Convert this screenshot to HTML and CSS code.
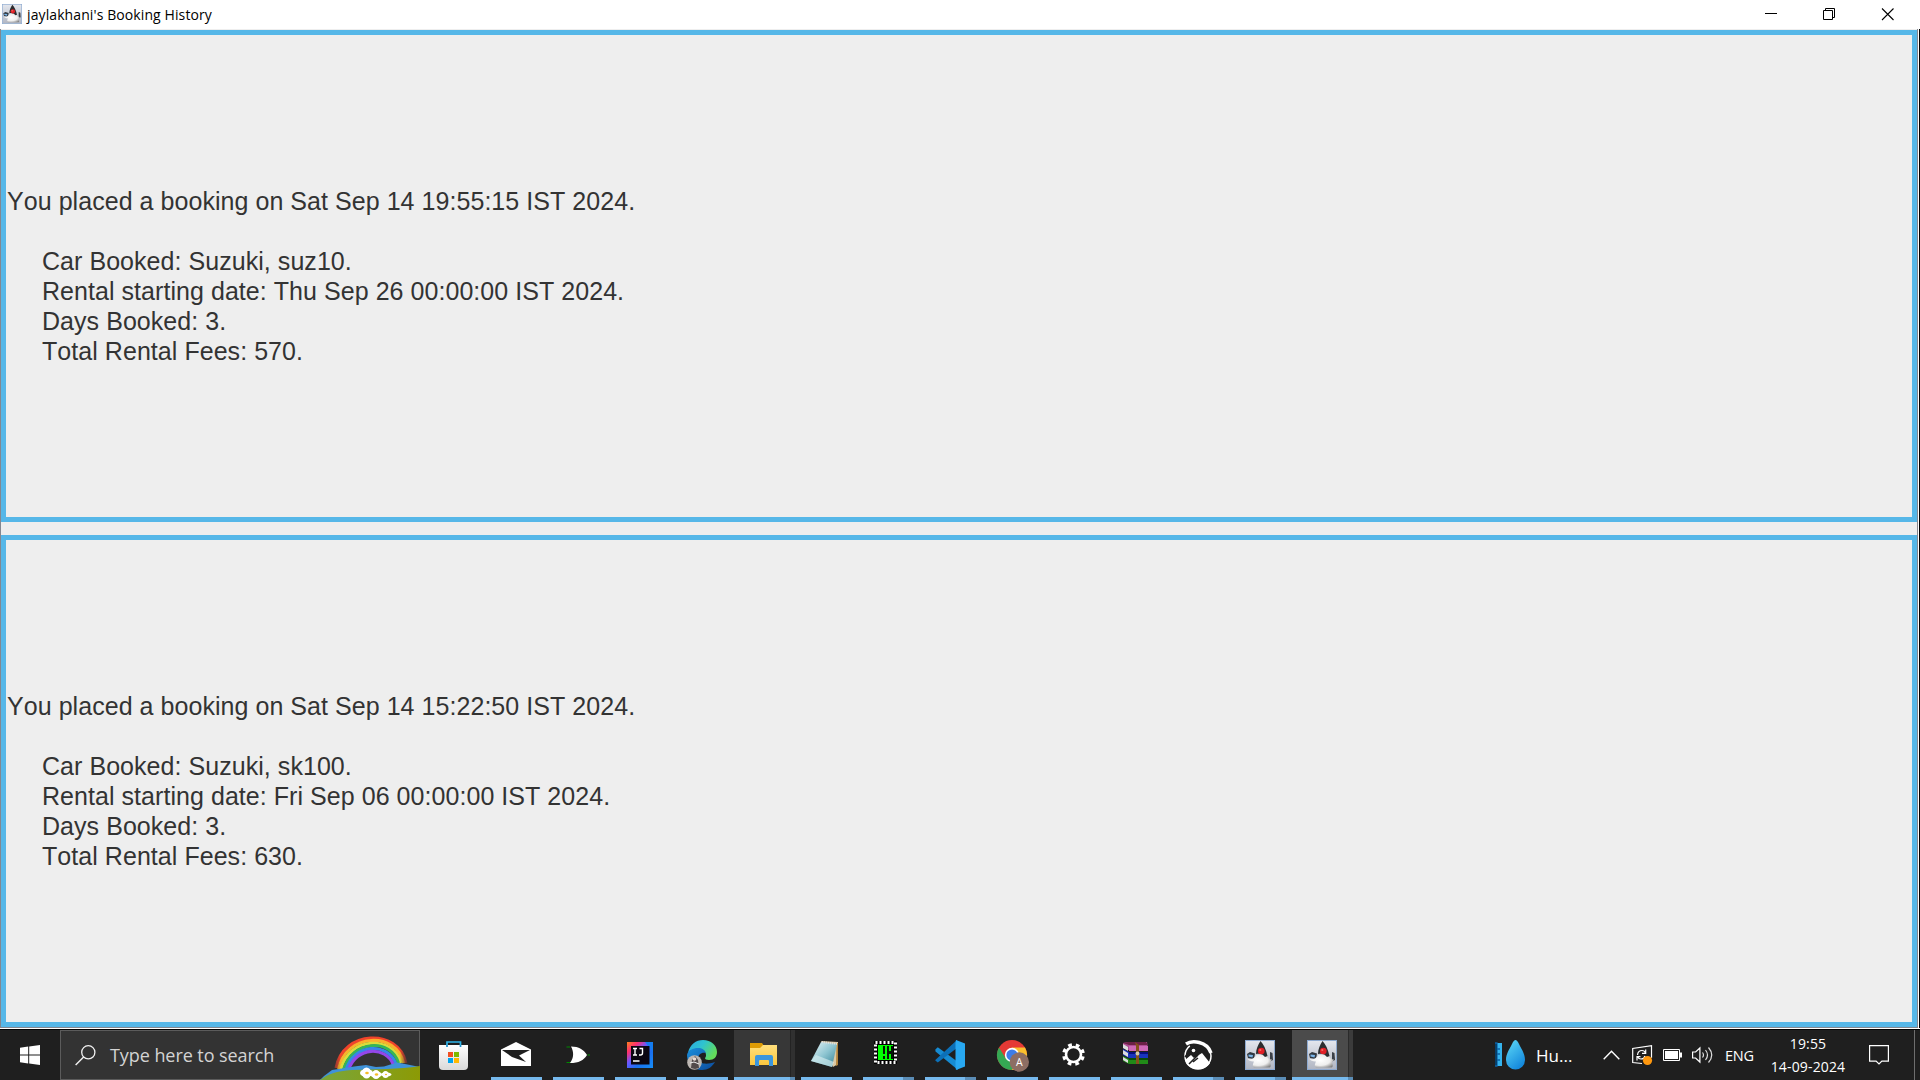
FILE: index.html
```html
<!DOCTYPE html>
<html lang="en">
<head>
<meta charset="utf-8">
<title>jaylakhani's Booking History</title>
<link rel="stylesheet" href="styles.css">
</head>
<body>
<svg class="defs" aria-hidden="true">
  <defs>
    <linearGradient id="tile" x1="0" y1="0" x2="0" y2="1"><stop offset="0" stop-color="#e4e7ee"/><stop offset="1" stop-color="#b0b5c2"/></linearGradient>
    <radialGradient id="belly" cx=".45" cy=".45" r=".65"><stop offset="0" stop-color="#fff"/><stop offset=".6" stop-color="#eee"/><stop offset="1" stop-color="#858585"/></radialGradient>
    <symbol id="duke" viewBox="0 0 30 30">
      <rect x=".5" y=".5" width="29" height="29" fill="url(#tile)" stroke="#8eaad0"/>
      <path d="M2 14l3-2 5 1.500-1 5.500-6-1z" fill="#30373f"/><path d="M3.500 14.500l4.500.5-.5 2.500-4-1z" fill="#7ab4e8"/>
      <path d="M25 12l2.500 1 .5 7-3 1.500z" fill="#3b4048"/>
      <path d="M2 18.500c4 2 7 0 10-4h9c2 3 3 5 6 5l-2 3c1 3 1 4 0 5H9c-2-1-1-4 0-6-2 .5-6-1-7-3z" fill="url(#belly)"/>
      <path d="M15.500 1c3 3 5.500 8 7 15l-2.500 1c-2-3-5-4-9-3 0-5 2-9 4.500-13z" fill="#2c2d2f"/>
      <circle cx="16.300" cy="11" r="3.300" fill="#e01f26"/><circle cx="15.300" cy="10" r="1.100" fill="#f46a61"/>
    </symbol>
    <linearGradient id="bag" x1="0" y1="0" x2="0" y2="1"><stop offset="0" stop-color="#fff"/><stop offset="1" stop-color="#d9d9d9"/></linearGradient>
    <linearGradient id="ij" x1="0" y1="0" x2="1" y2="1"><stop offset="0" stop-color="#fc801d"/><stop offset=".22" stop-color="#fe2f70"/><stop offset=".42" stop-color="#6b57ff"/><stop offset=".65" stop-color="#1a6ff0"/><stop offset="1" stop-color="#168ef7"/></linearGradient>
    <linearGradient id="edgeTop" x1="0" y1="0" x2="1" y2=".5"><stop offset="0" stop-color="#2aa9e0"/><stop offset=".5" stop-color="#2fc3d0"/><stop offset="1" stop-color="#63dc5a"/></linearGradient>
    <linearGradient id="edgeLow" x1="0" y1="0" x2="1" y2="1"><stop offset="0" stop-color="#1b8fdc"/><stop offset="1" stop-color="#0b4a9c"/></linearGradient>
    <linearGradient id="folder" x1="0" y1="0" x2="0" y2="1"><stop offset="0" stop-color="#ffdf7c"/><stop offset="1" stop-color="#fbc73f"/></linearGradient>
    <linearGradient id="note" x1="0" y1="0" x2="1" y2="1"><stop offset="0" stop-color="#e9f5f7"/><stop offset=".5" stop-color="#8fc6d2"/><stop offset="1" stop-color="#2f7f93"/></linearGradient>
    <linearGradient id="drop" x1="0" y1="0" x2=".6" y2="1"><stop offset="0" stop-color="#5fdcf8"/><stop offset="1" stop-color="#1589dc"/></linearGradient>
    <linearGradient id="grass" x1="0" y1="0" x2="1" y2="0"><stop offset="0" stop-color="#7aa63a"/><stop offset="1" stop-color="#8c9a05"/></linearGradient>
    <linearGradient id="fade" x1="0" y1="0" x2="1" y2="0"><stop offset="0" stop-color="#555"/><stop offset=".1" stop-color="#fff"/><stop offset=".88" stop-color="#fff"/><stop offset="1" stop-color="#111"/></linearGradient>
    <mask id="bow"><rect x="13" y="0" width="76" height="50" fill="url(#fade)"/></mask>
  </defs>
</svg>

<div class="screen">
  <div class="window">
    <header class="titlebar">
      <svg class="app-icon"><use href="#duke"/></svg>
      <span class="caption">jaylakhani's Booking History</span>
      <div class="controls">
        <svg viewBox="0 0 58 29"><path d="M23 13.500h12" stroke="#000"/></svg>
        <svg viewBox="0 0 58 29"><path d="M23.500 10.500h9v9h-9zM25.500 10.500v-2h9v9h-2" fill="none" stroke="#000"/></svg>
        <svg viewBox="0 0 58 29"><path d="M24 8.500l11.500 11.500M35.500 8.500L24 20" fill="none" stroke="#000" stroke-width="1.100"/></svg>
      </div>
    </header>
    <main class="bookings">
      <section class="booking">
        <p class="placed">You placed a booking on Sat Sep 14 19:55:15 IST 2024.</p>
        <ul class="details">
          <li>Car Booked: Suzuki, suz10.</li>
          <li>Rental starting date: Thu Sep 26 00:00:00 IST 2024.</li>
          <li>Days Booked: 3.</li>
          <li>Total Rental Fees: 570.</li>
        </ul>
      </section>
      <section class="booking">
        <p class="placed">You placed a booking on Sat Sep 14 15:22:50 IST 2024.</p>
        <ul class="details">
          <li>Car Booked: Suzuki, sk100.</li>
          <li>Rental starting date: Fri Sep 06 00:00:00 IST 2024.</li>
          <li>Days Booked: 3.</li>
          <li>Total Rental Fees: 630.</li>
        </ul>
      </section>
    </main>
  </div>

  <footer class="taskbar">
    <div class="start"><svg width="20" height="20" viewBox="0 0 20 20"><path d="M0 2.800l8.200-1.200v7.900H0zM9.200 1.400L20 0v9.500H9.200zM0 10.500h8.200v7.900L0 17.300zM9.200 10.500H20V20L9.200 18.500z" fill="#fff"/></svg></div>
    <div class="search">
      <svg width="21" height="21" viewBox="0 0 21 21"><circle cx="13.300" cy="7.300" r="6.600" fill="none" stroke="#f2f2f2" stroke-width="1.300"/><path d="M8.600 12L.6 20" stroke="#f2f2f2" stroke-width="1.400"/></svg>
      <span class="hint">Type here to search</span>
      <svg class="rainbow" width="100" height="49" viewBox="0 0 100 49">
        <g fill="none" stroke-width="3.100" mask="url(#bow)">
          <path d="M16 37C23-1 78-3 86 32" stroke="#f0432b"/>
          <path d="M18.500 38C26 2 76 0 83.500 32" stroke="#fbb02c"/>
          <path d="M21 38C29 5.500 73 4 81 32" stroke="#d9dc3c"/>
          <path d="M23.500 39C32 8.500 71 7 78.500 32" stroke="#35b558"/>
          <path d="M26 39C34 12 68 11 76 33" stroke="#3587e8"/>
          <path d="M28.500 39C36 15.500 66 14.500 73.500 34" stroke="#9347ea"/>
        </g>
        <path d="M4 45l8-6 10-1.500 12-2 12-1.500 10 2 8-.5 13-4 8 1.500 15 3V49H0z" fill="#3f92d8"/>
        <path d="M0 49c8-6 16-9 32-10 24-1 46-.5 68-4v14z" fill="url(#grass)"/>
        <g fill="#fff"><ellipse cx="46.500" cy="42" rx="6.500" ry="4"/><ellipse cx="46.500" cy="42" rx="4.500" ry="5.500"/><ellipse cx="56" cy="43.500" rx="5.500" ry="3.500"/><ellipse cx="56" cy="43.500" rx="3.500" ry="4.500"/><ellipse cx="66" cy="43.500" rx="5.500" ry="2.200"/><ellipse cx="65.500" cy="43.500" rx="3" ry="3.500"/></g>
        <g fill="#f6bd28"><ellipse cx="47" cy="42" rx="1.800" ry="1.300"/><ellipse cx="56.500" cy="43.500" rx="1.700" ry="1.200"/><ellipse cx="66" cy="43.500" rx="1.100" ry=".8"/></g>
      </svg>
    </div>

    <nav class="apps">
      <div class="app"><svg viewBox="0 0 30 30"><path d="M8 6V2h13.500v4" fill="none" stroke="#2fb5ea" stroke-width="1.700"/><path d="M0 5h29v21q0 4-4 4H4q-4 0-4-4z" fill="url(#bag)"/><path d="M8 5v2M21.500 5v2" stroke="#1b92d0" stroke-width="1.700"/><path d="M9 12h5v5H9z" fill="#f25022"/><path d="M15 12h5v5h-5z" fill="#7fba00"/><path d="M9 18h5v5H9z" fill="#00a4ef"/><path d="M15 18h5v5h-5z" fill="#ffb900"/></svg></div>
      <div class="app running"><svg viewBox="0 0 30 30"><path d="M0 9.500L15 2l15 7.500V26H0z" fill="#fff"/><path d="M1 10h28l-11 5.500 7 6.500L11 17z" fill="#1f1f1f"/></svg></div>
      <div class="app running"><svg viewBox="0 0 30 30"><path d="M3.500 7H7M3.500 22.500h5M24.500 15h2.500" stroke="#008a00" stroke-width="1.100"/><path d="M8 6.500c8 0 12.500 3 16 8.500-3.500 5.500-8 8-17 8 4-5 4-11 1-16.500z" fill="#fff"/></svg></div>
      <div class="app running"><svg viewBox="0 0 30 30"><path d="M2 2h26v26H2z" fill="url(#ij)"/><path d="M20 2h8v10z" fill="#147cf0"/><path d="M6 6h18.500v18.500H6z" fill="#0b0612"/><path d="M8 8.500h4M10 8.500v6.500M8 15h4M14.500 8.500h3v4.500q0 2-2 2H14M8 21h6.500" fill="none" stroke="#fff" stroke-width="1.400"/></svg></div>
      <div class="app running"><svg viewBox="0 0 30 30"><path d="M1 13C3 4 9 0 16 0c8 0 14 5 14 12 0 5-3 8-8 8-3 0-4-1-4-2 1-1 1-2 1-3 0-4-4-6-8-6-5 0-9 2-10 4z" fill="url(#edgeTop)"/><path d="M0 15c1-5 6-7 11-7 4 0 7 2 8 5-5-1-8 2-8 6 1 5 9 6 17 3-3 5-7 8-13 8C7 30 0 24 0 15z" fill="url(#edgeLow)"/><circle cx="7.500" cy="22.500" r="7.300" fill="#bdb7b2"/><path d="M4 28l1-8 3-4 3 4 1 8-4 1z" fill="#514a4a"/><circle cx="7.500" cy="19" r="1.800" fill="#e8ddd6"/><path d="M3 23l4-1 5 2" stroke="#eee" fill="none"/></svg></div>
      <div class="app running hover grouped"><svg viewBox="0 0 30 30"><path d="M1 3h12l2 3v4H1z" fill="#dd9b05"/><path d="M1 8h10l3-3h14v20H1z" fill="url(#folder)"/><path d="M6 26V17q0-2 2-2h14q2 0 2 2v9h-4v-5q0-1-1-1h-8q-1 0-1 1v5z" fill="#3b96dd"/></svg></div>
      <div class="app running"><svg viewBox="0 0 30 30"><path d="M10 1l17 1v22l-5 3z" fill="#d9c8a5"/><path d="M25.500 3l1.500 0v22l-2 1z" fill="#b4843b"/><path d="M10 2l16 2-5 23L0 21z" fill="url(#note)"/><path d="M0 21l5-6 18 7-2 5z" fill="#d5ecef" opacity=".65"/><path d="M11 2l15 2" stroke="#dedede" stroke-width="2" stroke-dasharray="1 1"/></svg></div>
      <div class="app running stacked"><svg viewBox="0 0 30 30"><path d="M1 1h23v23H1z" fill="#000"/><rect x="2.500" y="2.500" width="20" height="20" fill="none" stroke="#fff" stroke-width="3" stroke-dasharray="2 2"/><path d="M4 4h17v17H4z" fill="#000"/><path d="M5 5h15v15H5z" fill="#0f0"/><path d="M10 6v8h2V6zM10 16v3h2v-3zM14 6v13h2v-5h2v5h2V6h-2v5h-2V6z" fill="#051505"/></svg></div>
      <div class="app running stacked"><svg viewBox="0 0 30 30"><path d="M.3 9.500l2.500-2.300L23 22v8L.5 11.500z" fill="#168bd2"/><path d="M.3 20L22 0v8L2.800 22.600.3 20.500z" fill="#0c70b8"/><path d="M21 0l9 3.500v23L21 30l-.5-3V3z" fill="#28a8f1"/></svg></div>
      <div class="app running"><svg viewBox="0 0 32 32"><circle cx="15" cy="15" r="15" fill="#e53935"/><path d="M2 7.500A15 15 0 0 0 15 30l6-11-12 0z" fill="#35a853"/><path d="M15 30A15 15 0 0 0 28 7.500H15l6 11z" fill="#fbc02d"/><circle cx="15" cy="15" r="7.200" fill="#fff"/><circle cx="15" cy="15" r="5.600" fill="#3e7de8"/><circle cx="22.300" cy="22" r="9.700" fill="#8d6e63"/><text x="22.300" y="26" text-anchor="middle" class="avatar">A</text></svg></div>
      <div class="app running"><svg viewBox="0 0 30 30"><circle cx="14.500" cy="14.500" r="7.500" fill="none" stroke="#fff" stroke-width="2.600"/><circle cx="14.500" cy="14.500" r="9.700" fill="none" stroke="#fff" stroke-width="3.400" stroke-dasharray="3.700 3.918" stroke-dashoffset="-2"/></svg></div>
      <div class="app running"><svg viewBox="0 0 30 30"><path d="M2 3l5-1h19l1 8H7L2 8z" fill="#ae4b92"/><path d="M2 3l5-1h18l2 3H8z" fill="#6b2046"/><path d="M8 6h19v5H8z" fill="#ce68b6"/><path d="M2 9l6 3h19v6H8l-6-3z" fill="#1934bd"/><path d="M8 12h19v2H8z" fill="#07107e"/><path d="M2 16l6 3h19v5H8l-6-3z" fill="#218b18"/><path d="M8 18h19v2H8z" fill="#084b08"/><path d="M2 4l5 3v4L2 8zM2 10l5 3v4l-5-3zM2 17l5 3v3l-5-3z" fill="#ddd"/><path d="M14 2l4 3v19h-3V6z" fill="#84511d"/><circle cx="16.500" cy="13.500" r="2" fill="#d2c9a9"/></svg></div>
      <div class="app running stacked"><svg viewBox="0 0 30 30"><path d="M3 4c6-4 21-3 25 9" fill="none" stroke="#fff" stroke-width="3.500"/><circle cx="15" cy="16" r="13" fill="none" stroke="#fff" stroke-width="1.500" stroke-dasharray="60 22" stroke-dashoffset="8"/><path d="M2 20l6-5 3 3 8-5 8 10c-5 8-19 8-24 0z" fill="#fff"/><path d="M6 24l9-9M2 17l7-9M10 22l5-4" stroke="#1f1f1f" stroke-width="1.500"/><circle cx="10.500" cy="10.500" r="1.800" fill="#fff"/></svg></div>
      <div class="app running stacked"><svg viewBox="0 0 30 30"><use href="#duke"/></svg></div>
      <div class="app running active grouped"><svg viewBox="0 0 30 30"><use href="#duke"/></svg></div>
    </nav>

    <div class="tray">
      <svg width="31" height="30" viewBox="0 0 31 30"><path d="M0 3h7v23H0z" fill="#35b4ee"/><path d="M0 3h2v23H0zM2 9h3M2 14h3M2 20h3" stroke="#0b62a5" stroke-width="1.300"/><path d="M20.500 0c1.200 0 2 1 3.500 4 3 6 6 10 6 16a9.500 9.500 0 0 1-19 0c0-6 3-10 6-16 1.500-3 2.300-4 3.500-4z" fill="url(#drop)"/></svg>
      <span class="weather">Hu...</span>
      <svg class="chevron" width="17" height="10" viewBox="0 0 17 10"><path d="M.7 9.200L8.500 1.300l7.800 7.900" fill="none" stroke="#fff" stroke-width="1.400"/></svg>
      <svg class="update" width="21" height="21" viewBox="0 0 21 21"><path d="M10 18.500l-9.300-1V3.500L19.500.7v12" fill="none" stroke="#fff" stroke-width="1.200"/><path d="M5.500 10c.3-3 2-4.500 4.500-4.500 1.500 0 3 1 3.500 2.500M13.700 4.500V8.300H10M13 11c-.5 2-2 3-4 3-1.700 0-2.800-1-3.200-2M5 15.500V11.700h3.500" fill="none" stroke="#fff" stroke-width="1.200"/><circle cx="15.500" cy="15.500" r="4.600" fill="#ff980f"/></svg>
      <svg class="battery" width="19" height="12" viewBox="0 0 19 12"><path d="M.5.500h16v11H.5z" fill="none" stroke="#fff"/><path d="M2 2h13v8H2zM17 3.500h2v5h-2z" fill="#fff"/></svg>
      <svg class="sound" width="21" height="18" viewBox="0 0 21 18"><path d="M.6 6h3l4.300-4v14l-4.300-4h-3z" fill="none" stroke="#fff" stroke-width="1.200"/><path d="M10.500 6.500q2 2.500 0 5M13.500 4q4 5 0 10M16.500 1.500q6.500 7.500 0 15" fill="none" stroke="#ddd" stroke-width="1.200"/></svg>
      <span class="lang">ENG</span>
      <div class="clock"><span class="time">19:55</span><span class="date">14-09-2024</span></div>
      <svg class="notice" width="20" height="20" viewBox="0 0 20 20"><path d="M.6.600h18.800v15.500h-6.500L10 19l-2.900-2.900H.6z" fill="none" stroke="#fff" stroke-width="1.200"/></svg>
    </div>
    <div class="peek"></div>
  </footer>
</div>
</body>
</html>
```

FILE: styles.css
```css
* { box-sizing: border-box; }

body {
  margin: 0;
  background: #000;
  overflow: hidden;
}

.defs { position: absolute; width: 0; height: 0; }

.screen {
  width: 1920px;
  height: 1080px;
  display: flex;
  flex-direction: column;
}

.window {
  height: 1029px;
  background: #fff;
  display: flex;
  flex-direction: column;
}

.titlebar {
  height: 29px;
  padding-left: 2px;
  display: flex;
  flex: none;
}

.app-icon { width: 20px; height: 20px; margin: 4px 5px 0 0; }

.caption {
  font: 14px/29px "Open Sans", sans-serif;
  letter-spacing: 0.1px;
  color: #000;
  white-space: nowrap;
}

.controls { margin-left: auto; display: flex; padding-right: 4px; }
.controls svg { width: 58px; height: 29px; }

.bookings {
  flex: none;
  width: 1918px;
  height: 999px;
  border: 1px solid #828790;
  border-width: 0 1px 1px;
  padding-top: 1px;
  display: flex;
  flex-direction: column;
  gap: 13px;
  background: #eee;
  box-shadow: 1px 0 #fff, 2px 0 #000;
}

.booking {
  height: 492px;
  border: 5px solid #56b7e8;
  padding-left: 1px;
  display: flex;
  flex-direction: column;
  justify-content: center;
  font: 25px/30px "Liberation Sans", Arial, sans-serif;
  font-kerning: none;
  letter-spacing: 0.05px;
  color: #333;
}

.placed { margin: 0 0 30px; }
.details { list-style: none; margin: 0; padding-left: 35px; }

.taskbar {
  height: 51px;
  border-top: 1px solid #000;
  background: #1f1f1f;
  display: flex;
  font-family: "Open Sans", sans-serif;
  color: #fff;
}

.start {
  width: 60px;
  display: flex;
  align-items: center;
  justify-content: center;
}

.search {
  width: 360px;
  height: 50px;
  border: 1px solid #5b5b5b;
  background: #333;
  display: flex;
  align-items: center;
  padding-left: 14px;
}

.hint {
  margin-left: 14px;
  font-size: 18px;
  letter-spacing: -0.07px;
  color: #d3d3d3;
  white-space: nowrap;
}

.rainbow { margin: 0 -1px -1px auto; flex: none; }

.apps { display: flex; margin-left: 3px; }

.app {
  width: 62px;
  height: 50px;
  padding-top: 10px;
  display: flex;
  flex-direction: column;
  justify-content: space-between;
}

.app > svg { width: 30px; height: 30px; margin-left: 16px; overflow: visible; }
.app:has(.avatar) > svg { width: 32px; height: 32px; }
.avatar { font: 10.500px "Open Sans", sans-serif; fill: #fff; }

.running::after {
  content: "";
  width: 51px;
  height: 3px;
  margin-left: 6px;
  background: #76b9ed;
}

.stacked::after { background: linear-gradient(90deg, #76b9ed 40px, #5b8db6 40px); }

.grouped { border-left: 1px solid #1f1f1f; }
.grouped > svg { margin-left: 15px; }
.grouped::after {
  width: 61px;
  margin-left: 0;
  background: linear-gradient(90deg, #76b9ed 56px, #5b8db6 56px);
}

.hover { background: linear-gradient(90deg, #373737 56px, #232323 56px, #232323 57px, #303030 57px); }
.active { background: linear-gradient(90deg, #4b4b4b 56px, #2b2b2b 56px, #2b2b2b 57px, #3b3b3b 57px); }

.tray {
  margin-left: auto;
  display: flex;
  align-items: center;
}

.weather { width: 35px; margin-left: 10px; font-size: 17px; white-space: nowrap; }
.chevron { margin-left: 32px; }
.update { margin-left: 12px; }
.battery { margin-left: 10px; }
.sound { margin-left: 10px; }
.lang { width: 30px; margin-left: 12px; font-size: 14.500px; letter-spacing: -0.2px; }

.clock {
  width: 76px;
  margin-left: 15px;
  display: flex;
  flex-direction: column;
  align-items: center;
  font-size: 14px;
  letter-spacing: 0.15px;
  line-height: 23px;
  white-space: nowrap;
}

.notice { margin-left: 23px; }

.peek { width: 6px; margin-left: 25px; border-left: 1px solid #6e6e6e; }
```
